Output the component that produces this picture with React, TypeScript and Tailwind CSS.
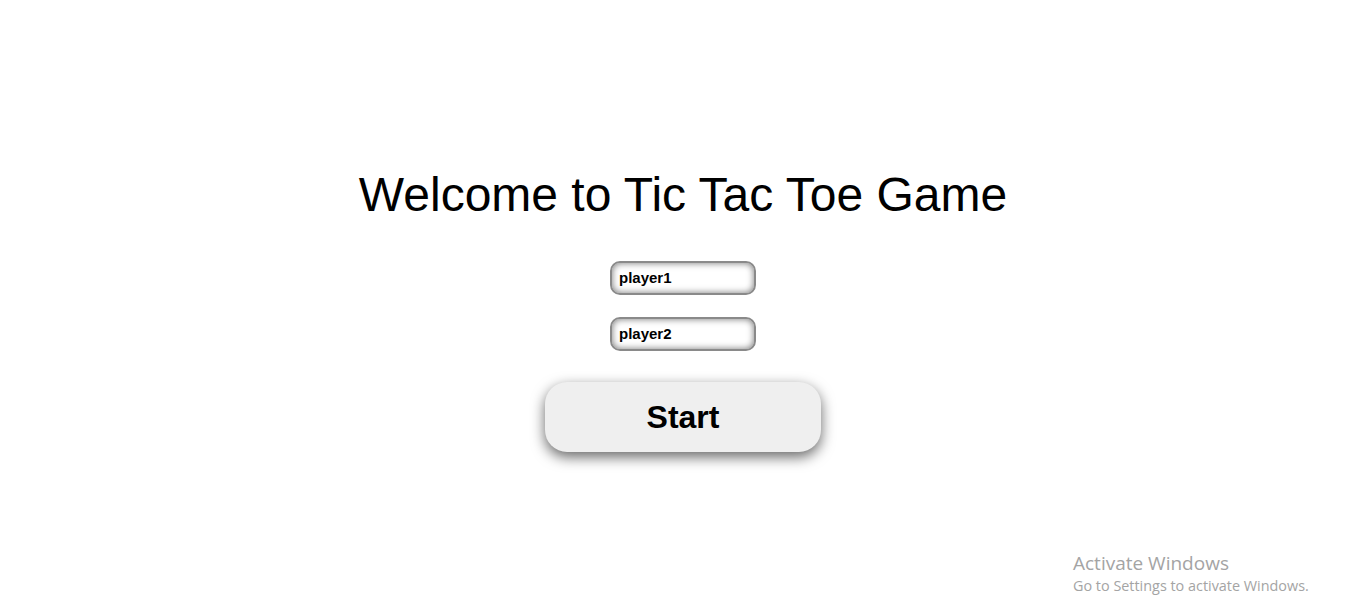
import React, { useState } from 'react';

export default function App() {
  const [player1, setPlayer1] = useState('player1');
  const [player2, setPlayer2] = useState('player2');

  return (
    <div className="relative h-[595px] w-full overflow-hidden bg-white font-['Liberation_Sans',Arial,sans-serif] text-black">
      <div className="flex flex-col items-center pl-[8px] pt-[167px]">
        <h1 className="text-[48px] leading-[55px] font-normal">Welcome to Tic Tac Toe Game</h1>

        <input
          value={player1}
          onChange={(e) => setPlayer1(e.target.value)}
          className="mt-[39px] h-[34px] w-[146px] rounded-[10px] border-2 border-[#8a8a8a] bg-white px-[7px] pb-[2px] text-[15px] font-bold outline-none shadow-[inset_0_0_7px_rgba(0,0,0,0.55)]"
        />
        <input
          value={player2}
          onChange={(e) => setPlayer2(e.target.value)}
          className="mt-[22px] h-[34px] w-[146px] rounded-[10px] border-2 border-[#8a8a8a] bg-white px-[7px] pb-[2px] text-[15px] font-bold outline-none shadow-[inset_0_0_7px_rgba(0,0,0,0.55)]"
        />

        <button className="mt-[31px] h-[70px] w-[276px] rounded-[22px] bg-[#efefef] text-[32px] font-bold shadow-[0_5px_14px_rgba(0,0,0,0.6)]">
          Start
        </button>
      </div>

      <div className="absolute left-[1073px] top-[551px] font-['Open_Sans',sans-serif] text-[#a4a4a4]">
        <p className="text-[19px] leading-[24px]">Activate Windows</p>
        <p className="text-[14.4px] leading-[22px]">Go to Settings to activate Windows.</p>
      </div>
    </div>
  );
}
